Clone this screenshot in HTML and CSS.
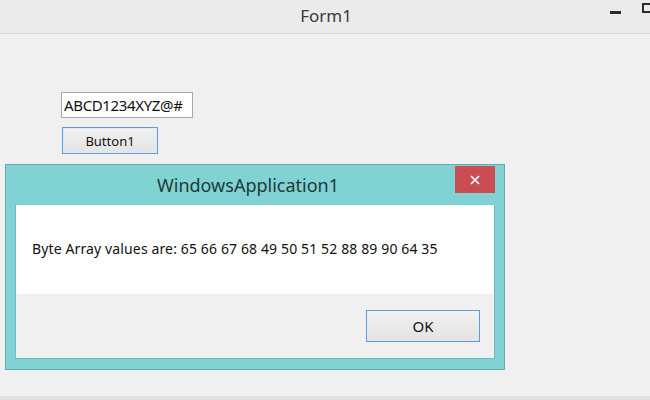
FILE: index.html
```html
<!DOCTYPE html>
<html>
<head>
<meta charset="utf-8">
<link rel="stylesheet" href="styles.css">
</head>
<body>
<div class="window">
  <div class="titlebar">
    <span class="title">Form1</span>
    <div class="controls">
      <span class="min"></span>
      <span class="max"></span>
    </div>
  </div>
  <div class="form">
    <div class="textbox">ABCD1234XYZ@#</div>
    <div class="button btn1">Button1</div>
  </div>
  <div class="bottomline"></div>

  <div class="dialog">
    <div class="dlg-title">
      <span class="dlg-caption">WindowsApplication1</span>
      <div class="close">
        <svg width="10" height="10" viewBox="0 0 10 10"><path d="M1 1 L9 9 M9 1 L1 9" stroke="#ffffff" stroke-width="1.7" fill="none"/></svg>
      </div>
    </div>
    <div class="dlg-body">
      <div class="dlg-msg">Byte Array values are: 65 66 67 68 49 50 51 52 88 89 90 64 35</div>
      <div class="dlg-foot">
        <div class="button ok">OK</div>
      </div>
    </div>
  </div>
</div>
</body>
</html>
```
FILE: styles.css
```css
* { box-sizing: border-box; }
html, body { margin: 0; padding: 0; }
body {
  width: 650px;
  height: 400px;
  overflow: hidden;
  background: #f0f0f0;
  font-family: "Noto Sans", "Open Sans", sans-serif;
  color: #1a1a1a;
}
.window {
  position: relative;
  width: 650px;
  height: 400px;
  display: flex;
  flex-direction: column;
}
.titlebar {
  height: 34px;
  background: #ebebeb;
  border-bottom: 1px solid #d8d8d8;
  display: flex;
  align-items: center;
  justify-content: center;
  position: relative;
}
.title {
  font-size: 17px;
  color: #3a3a3a;
  margin-top: -3px;
  margin-left: 2px;
}
.controls {
  position: absolute;
  right: 0;
  top: 0;
  height: 24px;
  display: flex;
  align-items: center;
  gap: 21px;
}
.min {
  width: 11px;
  height: 3px;
  background: #2a2a2a;
}
.max {
  width: 8px;
  height: 10px;
  border: 2px solid #2a2a2a;
  border-right: none;
  margin-top: -8px;
}
.form {
  flex: 1;
  padding: 58px 0 0 61px;
  display: flex;
  flex-direction: column;
  align-items: flex-start;
  gap: 9px;
}
.textbox {
  width: 132px;
  height: 26px;
  background: #ffffff;
  border: 1px solid #a9a9a9;
  font-size: 15px;
  line-height: 24px;
  padding-left: 2px;
  letter-spacing: -0.35px;
  color: #111;
  white-space: nowrap;
  overflow: hidden;
}
.button {
  background: linear-gradient(#f1f1f1, #e3e3e3);
  border: 1px solid #5a9bd8;
  color: #111;
  display: flex;
  align-items: center;
  justify-content: center;
}
.btn1 {
  width: 96px;
  height: 27px;
  margin-left: 1px;
  font-size: 13px;
  box-shadow: inset 0 0 0 1px #dcecfc;
}
.bottomline {
  height: 4px;
  background: #e1e1e1;
}
.dialog {
  position: absolute;
  left: 5px;
  top: 164px;
  width: 500px;
  height: 206px;
  background: #80d2d3;
  border: 1px solid #62acad;
  padding: 0 9px 10px 9px;
  display: flex;
  flex-direction: column;
}
.dlg-title {
  height: 40px;
  display: flex;
  align-items: center;
  justify-content: center;
  position: relative;
}
.dlg-caption {
  font-size: 18px;
  color: #1f3a3a;
  margin-top: -1px;
  margin-right: 14px;
}
.close {
  position: absolute;
  right: 0;
  top: 1px;
  width: 40px;
  height: 27px;
  background: #c94d52;
  display: flex;
  align-items: center;
  justify-content: center;
}
.dlg-body {
  flex: 1;
  display: flex;
  flex-direction: column;
  border: 1px solid #6fbcbc;
  border-top: none;
}
.dlg-msg {
  height: 89px;
  background: #ffffff;
  font-size: 14px;
  letter-spacing: 0.13px;
  padding: 34px 0 0 16px;
  color: #111;
}
.dlg-foot {
  flex: 1;
  background: #f0f0f0;
  display: flex;
  justify-content: flex-end;
  align-items: flex-start;
  padding: 16px 14px 0 0;
}
.ok {
  width: 114px;
  height: 32px;
  font-size: 15px;
}
```
